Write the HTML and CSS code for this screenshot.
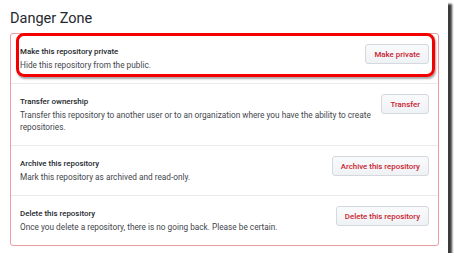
FILE: index.html
```html
<!DOCTYPE html>
<html lang="en">
<head>
    <meta charset="UTF-8">
    <title>Danger Zone</title>
    <link rel="stylesheet" href="styles.css">
</head>
<body>
    <div class="shot">
        <h2 class="zone-title">Danger Zone</h2>

        <div class="danger-box">
            <div class="danger-row">
                <div class="row-text">
                    <strong>Make this repository private</strong>
                    <p>Hide this repository from the public.</p>
                </div>
                <button class="btn-danger">Make private</button>
            </div>

            <div class="danger-row">
                <div class="row-text">
                    <strong>Transfer ownership</strong>
                    <p>Transfer this repository to another user or to an organization where you have the ability to create repositories.</p>
                </div>
                <button class="btn-danger">Transfer</button>
            </div>

            <div class="danger-row">
                <div class="row-text">
                    <strong>Archive this repository</strong>
                    <p>Mark this repository as archived and read-only.</p>
                </div>
                <button class="btn-danger">Archive this repository</button>
            </div>

            <div class="danger-row">
                <div class="row-text">
                    <strong>Delete this repository</strong>
                    <p>Once you delete a repository, there is no going back. Please be certain.</p>
                </div>
                <button class="btn-danger">Delete this repository</button>
            </div>

            <!-- red annotation drawn over the first row -->
            <div class="highlight"></div>
        </div>
    </div>
</body>
</html>
```

FILE: styles.css
```css
:root {
    --text: #24292e;
    --muted: #3f464d;
    --danger: #cb2431;
    --box-border: #eb9ca4;
    --row-border: #e8eaed;
    --ui-font: Roboto, "Noto Sans", sans-serif;
}

* { margin: 0; padding: 0; box-sizing: border-box; }

body {
    background: #fff;
    font-family: var(--ui-font);
    color: var(--text);
}

/* the captured window with its drop shadow */
.shot {
    width: 448px;
    height: 253px;
    background: #fff;
    padding: 8px 9px 0 10px;
    box-shadow: 4px 4px 2px 0 rgba(25, 25, 25, 0.85);
}

.zone-title {
    font-size: 14.5px;
    font-weight: 400;
    line-height: 22px;
    margin-bottom: 3px;
}

.danger-box {
    position: relative;
    border: 1px solid var(--box-border);
    border-radius: 3px;
}

.danger-row {
    display: flex;
    align-items: flex-start;
    gap: 5px;
    padding: 11px 9px 12px 9px;
    border-top: 1px solid var(--row-border);
}
.danger-row:first-child { border-top: none; }

.row-text { flex: 1; }

.row-text strong {
    display: block;
    font-size: 7.9px;
    font-weight: 500;
    line-height: 14px;
}

.row-text p {
    font-size: 8.25px;
    line-height: 12px;
    color: var(--muted);
}

.btn-danger {
    margin-top: -1px;
    height: 20px;
    padding: 0 8px;
    font-family: var(--ui-font);
    font-size: 7.9px;
    font-weight: 500;
    color: var(--danger);
    background: linear-gradient(#f9fafb, #eff2f5);
    border: 1px solid #d5d8dc;
    border-radius: 3px;
    white-space: nowrap;
}

.highlight {
    position: absolute;
    left: 5px;
    top: -1px;
    width: 419px;
    height: 44px;
    border: 3px solid #f40000;
    border-radius: 8px;
    box-shadow: 1px 2px 2px rgba(0, 0, 0, 0.35);
}
```
